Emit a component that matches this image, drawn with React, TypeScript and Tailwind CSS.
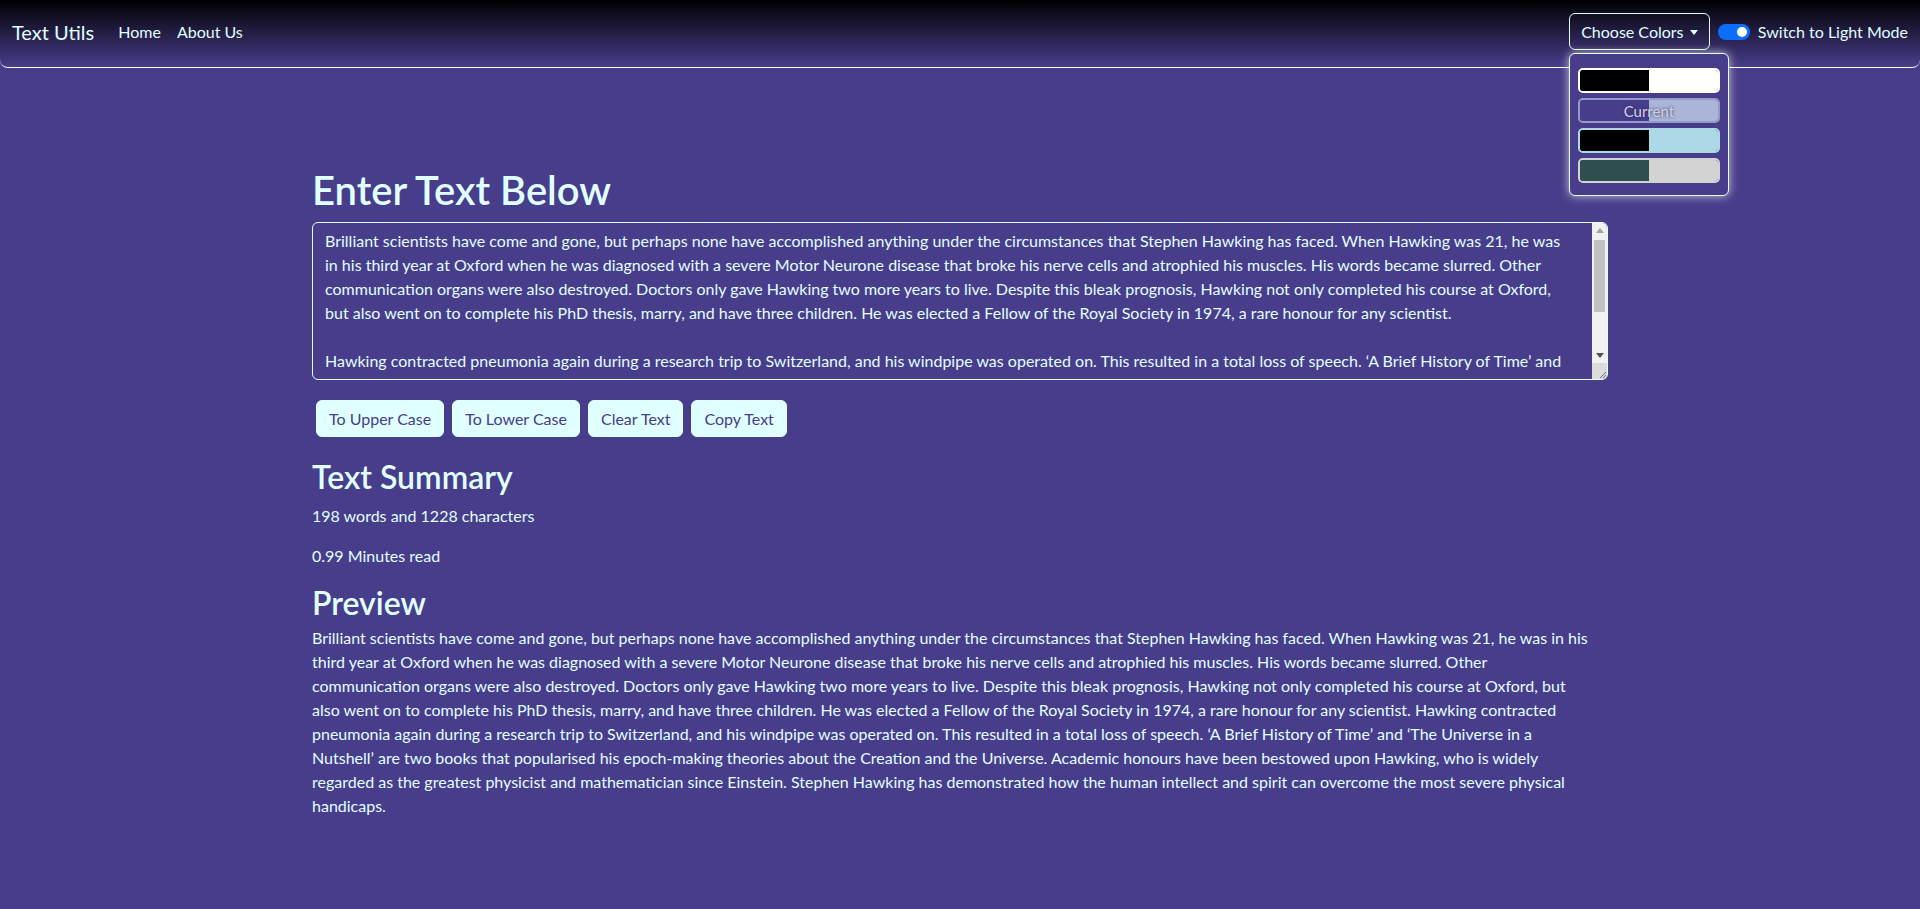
import React from "react";

const taLines = [
  "Brilliant scientists have come and gone, but perhaps none have accomplished anything under the circumstances that Stephen Hawking has faced. When Hawking was 21, he was",
  "in his third year at Oxford when he was diagnosed with a severe Motor Neurone disease that broke his nerve cells and atrophied his muscles. His words became slurred. Other",
  "communication organs were also destroyed. Doctors only gave Hawking two more years to live. Despite this bleak prognosis, Hawking not only completed his course at Oxford,",
  "but also went on to complete his PhD thesis, marry, and have three children. He was elected a Fellow of the Royal Society in 1974, a rare honour for any scientist.",
  "",
  "Hawking contracted pneumonia again during a research trip to Switzerland, and his windpipe was operated on. This resulted in a total loss of speech. \u2018A Brief History of Time\u2019 and",
  "\u2018The Universe in a Nutshell\u2019 are two books that popularised his epoch-making theories about the Creation and the Universe. Academic honours have been bestowed upon",
  "Hawking, who is widely regarded as the greatest physicist and mathematician since Einstein. Stephen Hawking has demonstrated how the human intellect and spirit can",
  "overcome the most severe physical handicaps.",
];

const previewLines = [
  "Brilliant scientists have come and gone, but perhaps none have accomplished anything under the circumstances that Stephen Hawking has faced. When Hawking was 21, he was in his",
  "third year at Oxford when he was diagnosed with a severe Motor Neurone disease that broke his nerve cells and atrophied his muscles. His words became slurred. Other",
  "communication organs were also destroyed. Doctors only gave Hawking two more years to live. Despite this bleak prognosis, Hawking not only completed his course at Oxford, but",
  "also went on to complete his PhD thesis, marry, and have three children. He was elected a Fellow of the Royal Society in 1974, a rare honour for any scientist. Hawking contracted",
  "pneumonia again during a research trip to Switzerland, and his windpipe was operated on. This resulted in a total loss of speech. \u2018A Brief History of Time\u2019 and \u2018The Universe in a",
  "Nutshell\u2019 are two books that popularised his epoch-making theories about the Creation and the Universe. Academic honours have been bestowed upon Hawking, who is widely",
  "regarded as the greatest physicist and mathematician since Einstein. Stephen Hawking has demonstrated how the human intellect and spirit can overcome the most severe physical",
  "handicaps.",
];

const font = { fontFamily: "Lato, 'Noto Sans', sans-serif" };

function FakeScrollbar() {
  return (
    <div className="w-[15px] flex flex-col bg-[#f1f1f1]">
      <div className="h-[15px] flex items-center justify-center">
        <svg width="8" height="5" viewBox="0 0 8 5">
          <path d="M0 5 L4 0 L8 5 Z" fill="#a3a3a3" />
        </svg>
      </div>
      <div className="flex-1 px-[2px] pt-[2px]">
        <div className="h-[72px] bg-[#c1c1c1]"></div>
      </div>
      <div className="h-[15px] flex items-center justify-center">
        <svg width="8" height="5" viewBox="0 0 8 5">
          <path d="M0 0 L8 0 L4 5 Z" fill="#505050" />
        </svg>
      </div>
      <div className="h-[16px] bg-[#dcdcdc] flex items-end justify-end">
        <svg width="10" height="10" viewBox="0 0 10 10">
          <path d="M9 3 L3 9 M9 6 L6 9" stroke="#6e6e6e" strokeWidth="1" />
        </svg>
      </div>
    </div>
  );
}

export default function App() {
  return (
    <div
      className="min-h-[909px] bg-[#483d8b] text-[#e0ffff] text-[16px] leading-6"
      style={font}
    >
      {/* Navbar */}
      <nav className="relative h-[68px] pb-[4px] border-b border-white rounded-b-[8px] bg-[linear-gradient(to_bottom,#000000,#483d8b)] flex items-center justify-between px-3">
        <div className="flex items-center">
          <span className="text-[20px] leading-[30px] mr-4">Text Utils</span>
          <a className="px-2 py-2">Home</a>
          <a className="px-2 py-2">About Us</a>
        </div>
        <div className="flex items-center">
          <div className="relative">
            <button className="h-[37px] w-[141px] border border-[#e0ffff] rounded-[6px] flex items-center justify-center gap-[6px] text-[#e0ffff]">
              <span>Choose Colors</span>
              <span className="inline-block w-0 h-0 border-l-[4px] border-r-[4px] border-t-[5px] border-l-transparent border-r-transparent border-t-[#e0ffff] mt-[1px]"></span>
            </button>
            <div className="absolute left-0 top-[40px] w-[160px] h-[143px] bg-[#483d8b] border border-[#e0ffff] rounded-[6px] shadow-[0_0_10px_rgba(255,255,255,0.7)] z-10 flex flex-col items-center pt-[14px] gap-[5px]">
              <div className="w-[142px] h-[25px] rounded-[5px] border-2 border-white flex overflow-hidden">
                <div className="w-1/2 bg-black"></div>
                <div className="w-1/2 bg-white"></div>
              </div>
              <div className="relative w-[142px] h-[25px] rounded-[5px] border-2 border-[#939bc9] flex overflow-hidden">
                <div className="w-1/2 bg-[#483d8b]"></div>
                <div className="w-1/2 bg-[#aab5d7]"></div>
                <span className="absolute inset-0 flex items-center justify-center text-[15px] text-[#d4d4e2] [text-shadow:0_0_3px_rgba(40,30,90,0.9)]">
                  Current
                </span>
              </div>
              <div className="w-[142px] h-[25px] rounded-[5px] border-2 border-[#add8e6] flex overflow-hidden">
                <div className="w-1/2 bg-black"></div>
                <div className="w-1/2 bg-[#add8e6]"></div>
              </div>
              <div className="w-[142px] h-[25px] rounded-[5px] border-2 border-[#d3d3d3] flex overflow-hidden">
                <div className="w-1/2 bg-[#2f4f4f]"></div>
                <div className="w-1/2 bg-[#d3d3d3]"></div>
              </div>
            </div>
          </div>
          <div className="ml-2 flex items-center">
            <div className="w-[32px] h-[16px] rounded-full bg-[#0d6efd] flex items-center justify-end pr-[3px]">
              <div className="w-[10px] h-[10px] rounded-full bg-white"></div>
            </div>
            <span className="ml-2">Switch to Light Mode</span>
          </div>
        </div>
      </nav>

      {/* Main */}
      <div className="w-[1296px] mx-auto pt-[98px]">
        <h1 className="text-[40px] leading-[48px] font-semibold mb-2">Enter Text Below</h1>
        <div className="h-[158px] flex border border-[#e0ffff] rounded-[6px] overflow-hidden">
          <textarea
            className="flex-1 block h-full bg-transparent text-[#e0ffff] pl-3 pr-2 py-[6px] leading-6 outline-none resize-none overflow-hidden whitespace-pre"
            style={font}
            spellCheck={false}
            wrap="off"
            readOnly
            value={taLines.join("\n")}
          />
          <FakeScrollbar />
        </div>
        <div className="flex gap-[8px] mt-[20px] ml-[4px]">
          {["To Upper Case", "To Lower Case", "Clear Text", "Copy Text"].map((t) => (
            <button
              key={t}
              className="h-[37px] px-3 rounded-[6px] bg-[#e0ffff] text-[#483d8b] border border-[#e0ffff]"
            >
              {t}
            </button>
          ))}
        </div>

        <div className="mt-[21px]">
          <h2 className="text-[32px] leading-[38px] font-semibold mb-2">Text Summary</h2>
          <p className="mb-4">198 words and 1228 characters</p>
          <p className="mb-4">0.99 Minutes read</p>
          <h2 className="text-[32px] leading-[38px] font-semibold mb-[4px]">Preview</h2>
          <p>
            {previewLines.map((l, i) => (
              <span key={i} className="block whitespace-nowrap">
                {l}
              </span>
            ))}
          </p>
        </div>
      </div>
    </div>
  );
}
